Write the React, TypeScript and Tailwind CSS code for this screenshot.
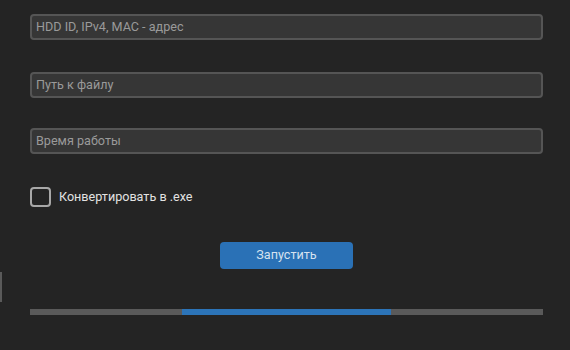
import React from "react";

function Field({ placeholder, className }: { placeholder: string; className?: string }) {
  return (
    <div
      className={
        "h-[26px] w-full rounded-[4px] border-2 border-[#555555] bg-[#363636] flex items-center px-[4px] " +
        (className ?? "")
      }
    >
      <span className="text-[12.6px] text-[#9a9a9a] leading-none">{placeholder}</span>
    </div>
  );
}

export default function App() {
  return (
    <div
      className="relative w-[570px] h-[350px] bg-[#242424] overflow-hidden"
      style={{ fontFamily: "Roboto, 'Noto Sans', sans-serif" }}
    >
      <div className="absolute left-0 top-[272px] h-[30px] w-[2px] bg-[#5a5a5a]" />
      <div className="flex flex-col pl-[30px] pr-[27px] pt-[14px]">
        <Field placeholder="HDD ID, IPv4, MAC - адрес" />
        <Field placeholder="Путь к файлу" className="mt-[32px]" />
        <Field placeholder="Время работы" className="mt-[30px]" />
        <div className="mt-[33px] flex items-center gap-[8px]">
          <div className="h-[20px] w-[21px] rounded-[4px] border-2 border-[#a8a8a8]" />
          <span className="text-[12.6px] text-[#e2e2e2] leading-none">Конвертировать в .exe</span>
        </div>
        <div className="mt-[35px] flex">
          <button className="ml-[190px] h-[27px] w-[133px] rounded-[4px] bg-[#2a71b6] text-[12.6px] text-[#d6e2f0] leading-none">
            Запустить
          </button>
        </div>
        <div className="mt-[40px] h-[6px] w-full bg-[#5a5a5a] flex">
          <div className="ml-[152px] w-[209px] h-full bg-[#2c74b8]" />
        </div>
      </div>
    </div>
  );
}
